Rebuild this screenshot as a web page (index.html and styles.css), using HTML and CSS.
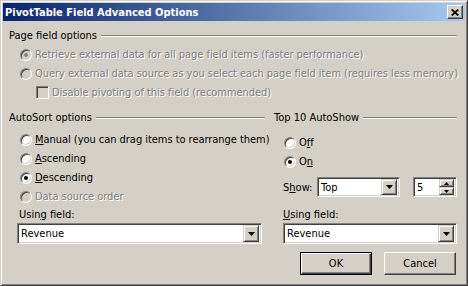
FILE: index.html
```html
<!DOCTYPE html>
<html lang="en">
<head>
    <meta charset="UTF-8">
    <title>PivotTable Field Advanced Options</title>
    <link rel="stylesheet" href="styles.css">
</head>
<body>
    <div class="window">
        <div class="titlebar">
            <span class="title">PivotTable Field Advanced Options</span>
            <span class="tbtn">
                <svg width="8" height="7" viewBox="0 0 8 7"><path d="M0.7 0.5L7.3 6.5M7.3 0.5L0.7 6.5" stroke="#000" stroke-width="1.8"/></svg>
            </span>
        </div>
        <div class="content">
            <div class="group-head"><span class="head-text">Page field options</span><i class="etch"></i></div>
            <div class="opt dis page-opt"><span class="radio checked"></span><span>Retrieve external data for all page field items (faster performance)</span></div>
            <div class="opt dis page-opt"><span class="radio"></span><span>Query external data source as you select each page field item (requires less memory)</span></div>
            <div class="opt dis check-opt"><span class="check"></span><span>Disable pivoting of this field (recommended)</span></div>

            <div class="cols">
                <div class="col">
                    <div class="group-head"><span class="head-text">AutoSort options</span><i class="etch"></i></div>
                    <div class="list">
                        <div class="opt sort-opt"><span class="radio"></span><span><u>M</u>anual (you can drag items to rearrange them)</span></div>
                        <div class="opt sort-opt"><span class="radio"></span><span><u>A</u>scending</span></div>
                        <div class="opt sort-opt"><span class="radio checked"></span><span><u>D</u>escending</span></div>
                        <div class="opt dis sort-opt"><span class="radio"></span><span>Data source order</span></div>
                    </div>
                    <div class="field-label left-label"><span>Usin<u>g</u> field:</span></div>
                    <div class="combo left-combo">
                        <span class="value">Revenue</span>
                        <span class="drop"><svg width="7" height="4" viewBox="0 0 7 4"><path d="M0 0h7L3.5 4z" fill="#000"/></svg></span>
                    </div>
                </div>
                <div class="col">
                    <div class="group-head"><span class="head-text">Top 10 AutoShow</span><i class="etch"></i></div>
                    <div class="list top-list">
                        <div class="opt top-opt"><span class="radio"></span><span>O<u>f</u>f</span></div>
                        <div class="opt top-opt"><span class="radio checked"></span><span>O<u>n</u></span></div>
                    </div>
                    <div class="show-row">
                        <span class="show-label">S<u>h</u>ow:</span>
                        <div class="combo show-combo">
                            <span class="value">Top</span>
                            <span class="drop"><svg width="7" height="4" viewBox="0 0 7 4"><path d="M0 0h7L3.5 4z" fill="#000"/></svg></span>
                        </div>
                        <div class="combo spin">
                            <span class="value">5</span>
                            <span class="spin-btns">
                                <span class="spin-btn"><svg width="5" height="3" viewBox="0 0 5 3"><path d="M2.5 0L5 3H0z" fill="#000"/></svg></span>
                                <span class="spin-btn"><svg width="5" height="3" viewBox="0 0 5 3"><path d="M0 0h5L2.5 3z" fill="#000"/></svg></span>
                            </span>
                        </div>
                    </div>
                    <div class="field-label right-label"><span><u>U</u>sing field:</span></div>
                    <div class="combo right-combo">
                        <span class="value">Revenue</span>
                        <span class="drop"><svg width="7" height="4" viewBox="0 0 7 4"><path d="M0 0h7L3.5 4z" fill="#000"/></svg></span>
                    </div>
                </div>
            </div>

            <div class="buttons">
                <span class="btn default">OK</span>
                <span class="btn">Cancel</span>
            </div>
        </div>
    </div>
</body>
</html>
```

FILE: styles.css
```css
body { margin: 0; font-family: "DejaVu Sans Condensed", "DejaVu Sans", sans-serif; font-stretch: condensed; font-size: 11px; color: #000; }
u { text-decoration: underline; text-underline-offset: 1px; }

.window { width: 468px; height: 286px; box-sizing: border-box; background: #d4d0c8; border: 1px solid; border-color: #d4d0c8 #404040 #404040 #d4d0c8; box-shadow: inset 1px 1px #fff, inset -1px -1px #808080; padding: 2px; display: flex; flex-direction: column; }

.titlebar { height: 18px; flex: none; display: flex; align-items: center; padding: 0 2px 0 2px; background: linear-gradient(to right, #0a246a, #a6caf0); color: #fff; font-weight: bold; }
.title { flex: 1; }
.tbtn { width: 16px; height: 14px; box-sizing: border-box; display: flex; align-items: center; justify-content: center; background: #d4d0c8; border: 1px solid; border-color: #fff #404040 #404040 #fff; box-shadow: inset -1px -1px #808080; }

.content { flex: 1; padding: 5px 8px 0 5px; }

.group-head { display: flex; align-items: center; height: 19px; gap: 4px; }
.head-text { padding-left: 1px; }
.etch { flex: 1; height: 0; border-top: 1px solid #808080; border-bottom: 1px solid #fff; }

.opt { display: flex; align-items: center; height: 19px; white-space: nowrap; letter-spacing: -0.04px; }
.dis { color: #808080; text-shadow: 1px 1px 0 #fff; }
.page-opt, .sort-opt { padding-left: 12px; }
.check-opt { padding-left: 28px; }
.top-opt { padding-left: 11px; }

.radio { width: 12px; height: 12px; flex: none; box-sizing: border-box; margin-right: 3px; border-radius: 50%; border: 1px solid; border-color: #808080 #fff #fff #808080; box-shadow: inset 1px 1px #404040, inset -1px -1px #d4d0c8; background: #fff; display: flex; align-items: center; justify-content: center; }
.radio.checked::after { content: ""; width: 4px; height: 4px; border-radius: 50%; background: #000; }
.dis .radio { background: #d4d0c8; }
.dis .radio.checked::after { background: #808080; }

.check { width: 13px; height: 13px; flex: none; box-sizing: border-box; margin-right: 3px; border: 1px solid; border-color: #808080 #fff #fff #808080; box-shadow: inset 1px 1px #404040, inset -1px -1px #d4d0c8; background: #d4d0c8; }

.cols { display: grid; grid-template-columns: 257px 184px; column-gap: 8px; margin-top: 6px; }
.col { display: flex; flex-direction: column; }
.list { margin-top: 3px; }
.top-list { margin-top: 6px; }

.field-label { height: 16px; display: flex; align-items: center; }
.left-label { padding-left: 11px; }
.right-label { padding-left: 10px; margin-top: 9px; }

.combo { height: 21px; box-sizing: border-box; display: flex; align-items: center; padding: 2px; margin-top: 1px; background: #fff; border: 1px solid; border-color: #808080 #fff #fff #808080; box-shadow: inset 1px 1px #404040, inset -1px -1px #d4d0c8; }
.combo .value { flex: 1; padding-left: 1px; }
.drop { width: 16px; height: 17px; flex: none; box-sizing: border-box; display: flex; align-items: center; justify-content: center; background: #d4d0c8; border: 1px solid; border-color: #d4d0c8 #404040 #404040 #d4d0c8; box-shadow: inset 1px 1px #fff, inset -1px -1px #808080; }
.left-combo { margin-left: 9px; width: 245px; }
.right-combo { margin-left: 10px; }

.show-row { display: flex; align-items: center; margin-top: 6px; padding-left: 10px; }
.show-label { width: 34px; }
.show-row .combo { margin-top: 0; height: 20px; }
.show-combo { width: 83px; }
.show-combo .drop { height: 16px; }
.spin { width: 44px; margin-left: 13px; }
.spin-btns { display: flex; flex-direction: column; width: 15px; height: 16px; }
.spin-btn { flex: 1; box-sizing: border-box; display: flex; align-items: center; justify-content: center; background: #d4d0c8; border: 1px solid; border-color: #d4d0c8 #404040 #404040 #d4d0c8; box-shadow: inset 1px 1px #fff, inset -1px -1px #808080; }

.buttons { display: flex; justify-content: flex-end; gap: 12px; margin-top: 8px; margin-right: 1px; }
.btn { width: 72px; height: 23px; box-sizing: border-box; display: flex; align-items: center; justify-content: center; background: #d4d0c8; border: 1px solid; border-color: #fff #404040 #404040 #fff; box-shadow: inset -1px -1px #808080; }
.btn.default { border-color: #000; box-shadow: inset 1px 1px #fff, inset -1px -1px #404040, inset -2px -2px #808080; }
```
